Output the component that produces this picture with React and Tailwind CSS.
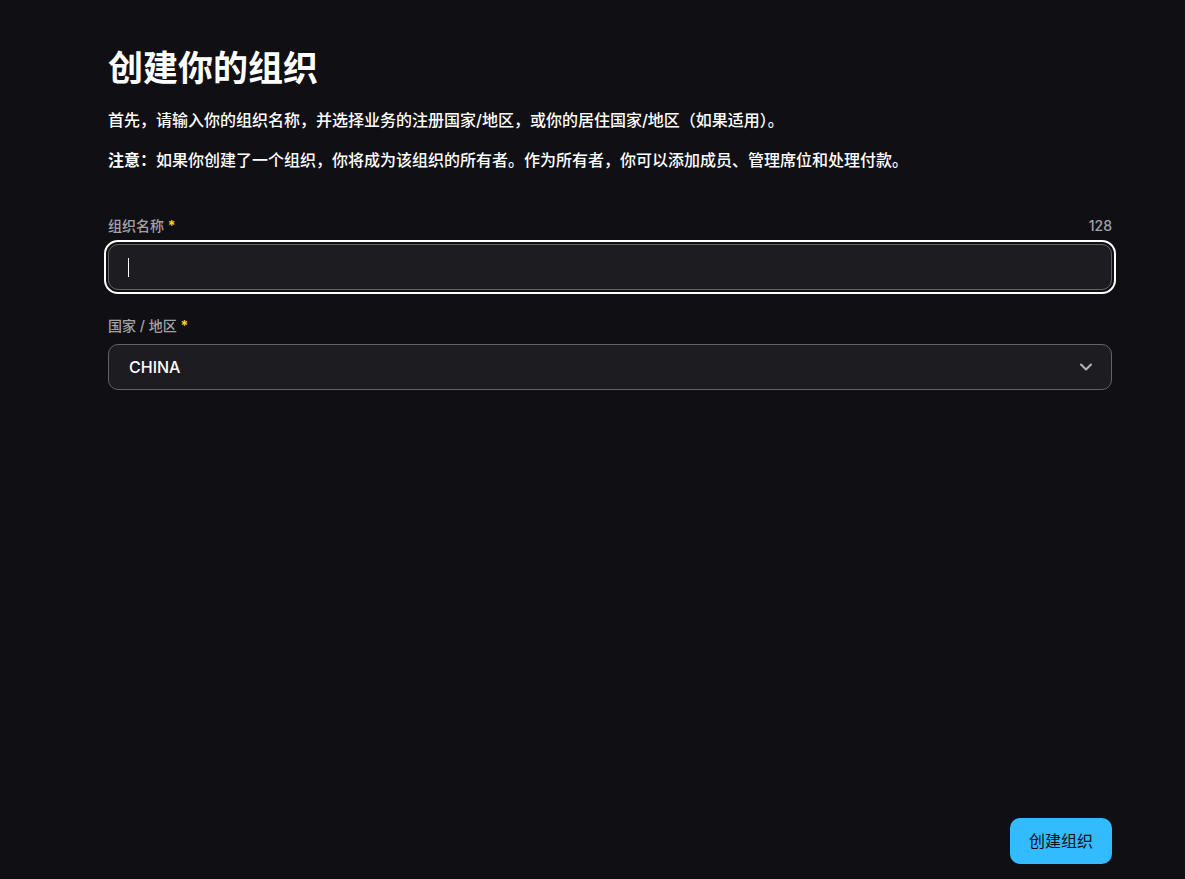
import React, { useState } from 'react';
import { ChevronDown } from 'lucide-react';

const MAX_NAME_LENGTH = 128;

const COUNTRIES = [
  { value: 'CN', label: 'CHINA' },
  { value: 'JP', label: 'JAPAN' },
  { value: 'US', label: 'UNITED STATES' },
];

function FieldLabel({ htmlFor, children }) {
  return (
    <label htmlFor={htmlFor} className="text-sm font-medium text-[#a3a3a5]">
      {children} <span className="font-bold text-[#f5d130]">*</span>
    </label>
  );
}

export default function App() {
  const [name, setName] = useState('');
  const [country, setCountry] = useState('CN');

  return (
    <main className="min-h-screen bg-[#101014] pl-[108px] pr-[73px] pt-11 pb-[15px] font-['Inter','Noto_Sans_CJK_SC',sans-serif] text-base text-white">
      <form
        className="flex min-h-[calc(100vh-59px)] flex-col"
        onSubmit={(e) => e.preventDefault()}
      >
        <h1 className="text-[35px] leading-12 font-bold">创建你的组织</h1>
        <p className="mt-4 leading-6 font-medium">
          首先，请输入你的组织名称，并选择业务的注册国家/地区，或你的居住国家/地区（如果适用）。
        </p>
        <p className="mt-4 leading-6 font-medium">
          <strong className="font-bold">注意：</strong>
          如果你创建了一个组织，你将成为该组织的所有者。作为所有者，你可以添加成员、管理席位和处理付款。
        </p>

        <div className="mt-11 flex h-5 items-center justify-between">
          <FieldLabel htmlFor="org-name">组织名称</FieldLabel>
          <span className="text-sm font-medium text-[#a3a3a5]">
            {MAX_NAME_LENGTH - name.length}
          </span>
        </div>
        <div className="relative mt-2">
          <input
            id="org-name"
            type="text"
            autoFocus
            required
            maxLength={MAX_NAME_LENGTH}
            value={name}
            onChange={(e) => setName(e.target.value)}
            className="peer block h-[46px] w-full rounded-[10px] border border-[#636366] bg-[#1d1d21] px-5 font-medium caret-white outline-offset-2 placeholder-shown:caret-transparent focus:outline-2 focus:outline-white"
            placeholder=" "
          />
          {/* steady caret while the field is empty */}
          <span className="pointer-events-none absolute inset-y-0 left-5 my-auto hidden h-[19px] w-px bg-white peer-placeholder-shown:peer-focus:block" />
        </div>

        <div className="mt-[26px] flex h-5 items-center">
          <FieldLabel htmlFor="org-country">国家 / 地区</FieldLabel>
        </div>
        <div className="mt-2 grid items-center">
          <select
            id="org-country"
            required
            value={country}
            onChange={(e) => setCountry(e.target.value)}
            className="col-start-1 row-start-1 h-[46px] w-full appearance-none rounded-[10px] border border-[#636366] bg-[#1d1d21] px-5 font-medium outline-offset-2 focus:outline-2 focus:outline-white"
          >
            {COUNTRIES.map((c) => (
              <option key={c.value} value={c.value}>
                {c.label}
              </option>
            ))}
          </select>
          <ChevronDown
            className="pointer-events-none col-start-1 row-start-1 mr-4 justify-self-end text-[#b4b4b6]"
            size={20}
            strokeWidth={2.5}
          />
        </div>

        <div className="mt-auto flex justify-end pt-8">
          <button
            type="submit"
            className="h-[46px] rounded-[10px] bg-[#33bbff] px-[19px] text-[#101014]"
          >
            创建组织
          </button>
        </div>
      </form>
    </main>
  );
}
